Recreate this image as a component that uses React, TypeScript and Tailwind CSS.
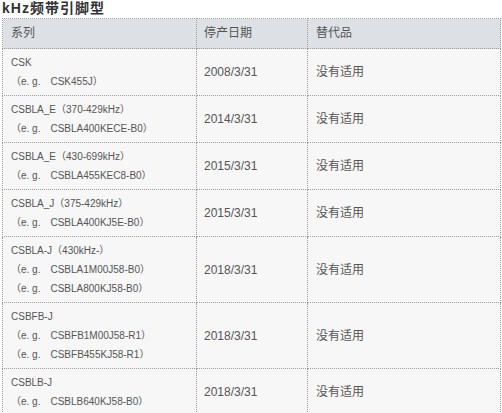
import React from "react";

type Row = {
  series: string[];
  date: string;
  alt: string;
};

const rows: Row[] = [
  { series: ["CSK", "（e. g.　CSK455J）"], date: "2008/3/31", alt: "没有适用" },
  { series: ["CSBLA_E（370-429kHz）", "（e. g.　CSBLA400KECE-B0）"], date: "2014/3/31", alt: "没有适用" },
  { series: ["CSBLA_E（430-699kHz）", "（e. g.　CSBLA455KEC8-B0）"], date: "2015/3/31", alt: "没有适用" },
  { series: ["CSBLA_J（375-429kHz）", "（e. g.　CSBLA400KJ5E-B0）"], date: "2015/3/31", alt: "没有适用" },
  {
    series: ["CSBLA-J（430kHz-）", "（e. g.　CSBLA1M00J58-B0）", "（e. g.　CSBLA800KJ58-B0）"],
    date: "2018/3/31",
    alt: "没有适用",
  },
  {
    series: ["CSBFB-J", "（e. g.　CSBFB1M00J58-R1）", "（e. g.　CSBFB455KJ58-R1）"],
    date: "2018/3/31",
    alt: "没有适用",
  },
  { series: ["CSBLB-J", "（e. g.　CSBLB640KJ58-B0）"], date: "2018/3/31", alt: "没有适用" },
];

const cell = "border border-dotted border-[#9a9a9a] align-middle";

export default function App() {
  return (
    <div className="w-[502px] h-[413px] bg-white pl-[2px] font-['Liberation_Sans','Noto_Sans_CJK_SC',sans-serif] text-[#555]">
      <h2 className="h-[18px] leading-[17px] text-[14px] font-bold tracking-[1px] text-[#333]">kHz频带引脚型</h2>
      <table className="w-[498px] table-fixed border-collapse">
        <colgroup>
          <col className="w-[194px]" />
          <col className="w-[111px]" />
          <col className="w-[193px]" />
        </colgroup>
        <thead>
          <tr className="bg-[#dde1e5] text-[12px] leading-[21px]">
            <th className={`${cell} px-[8px] py-[4px] text-left font-normal`}>系列</th>
            <th className={`${cell} px-[7px] py-[4px] text-left font-normal`}>停产日期</th>
            <th className={`${cell} px-[8px] py-[4px] text-left font-normal`}>替代品</th>
          </tr>
        </thead>
        <tbody>
          {rows.map((row, i) => (
            <tr key={i} className="bg-[#f7f7f7]">
              <td className={`${cell} px-[8px] py-[4px] text-[10px] leading-[19px]`}>
                {row.series.map((line, j) => (
                  <div key={j} className="whitespace-nowrap">
                    {line}
                  </div>
                ))}
              </td>
              <td className={`${cell} px-[7px] text-[12px]`}>{row.date}</td>
              <td className={`${cell} px-[8px] text-[12px]`}>{row.alt}</td>
            </tr>
          ))}
        </tbody>
      </table>
    </div>
  );
}
